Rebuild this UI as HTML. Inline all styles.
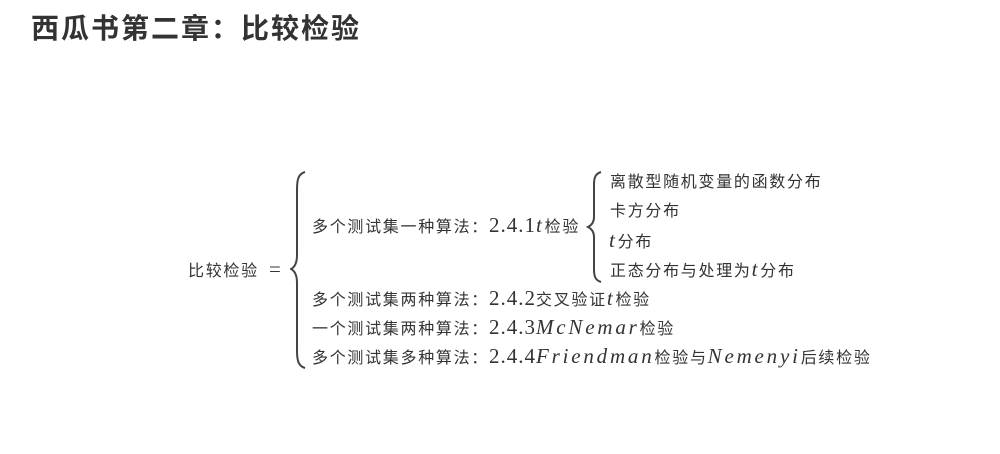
<!DOCTYPE html>
<html><head><meta charset="utf-8"><style>
body{margin:0;width:1000px;height:454px;background:#fff;position:relative;overflow:hidden;color:#333;font-family:"Liberation Sans","Noto Sans CJK SC",sans-serif}
h1{position:absolute;left:31px;top:12px;margin:0;font-size:28px;line-height:34px;font-weight:bold;letter-spacing:2px;color:#333;font-family:"Liberation Sans","Noto Sans CJK SC",sans-serif}
.t{position:absolute;font-size:16px;letter-spacing:1.7px;white-space:nowrap;line-height:20px}
.m{font-family:"Liberation Serif",serif;font-size:21px;letter-spacing:1px}
.i{font-style:italic;letter-spacing:2.8px}
svg{position:absolute}
</style></head><body>
<h1>西瓜书第二章：比较检验</h1>
<div class="t" style="left:188px;top:259px">比较检验 <span class="m" style="margin-left:4px">=</span></div>
<svg style="left:290px;top:170px" width="20" height="200" viewBox="0 0 20 200"><path d="M15 2 C8 4 7 10 7 20 L7 85 C7 93 5 97 1 99 C5 101 7 105 7 113 L7 180 C7 190 8 196 15 198" fill="none" stroke="#444" stroke-width="2"/></svg>
<div class="t" style="left:312px;top:215px">多个测试集一种算法：<span class="m">2.4.1<span class="i">t</span></span>检验</div>
<svg style="left:586px;top:170px" width="20" height="114" viewBox="0 0 20 114"><path d="M15 2 C9 4 8 8 8 15 L8 47 C8 52 6 55 2 57 C6 59 8 62 8 67 L8 99 C8 106 9 110 15 112" fill="none" stroke="#444" stroke-width="2"/></svg>
<div class="t" style="left:610px;top:173px">离散型随机变量的函数分布</div>
<div class="t" style="left:610px;top:202px">卡方分布</div>
<div class="t" style="left:609px;top:230px"><span class="m i">t</span>分布</div>
<div class="t" style="left:610px;top:259px">正态分布与处理为<span class="m i">t</span>分布</div>
<div class="t" style="left:312px;top:288px">多个测试集两种算法：<span class="m">2.4.2</span>交叉验证<span class="m i">t</span>检验</div>
<div class="t" style="left:312px;top:317px">一个测试集两种算法：<span class="m">2.4.3<span class="i">McNemar</span></span>检验</div>
<div class="t" style="left:312px;top:346px">多个测试集多种算法：<span class="m">2.4.4<span class="i">Friendman</span></span>检验与<span class="m i">Nemenyi</span>后续检验</div>
</body></html>
